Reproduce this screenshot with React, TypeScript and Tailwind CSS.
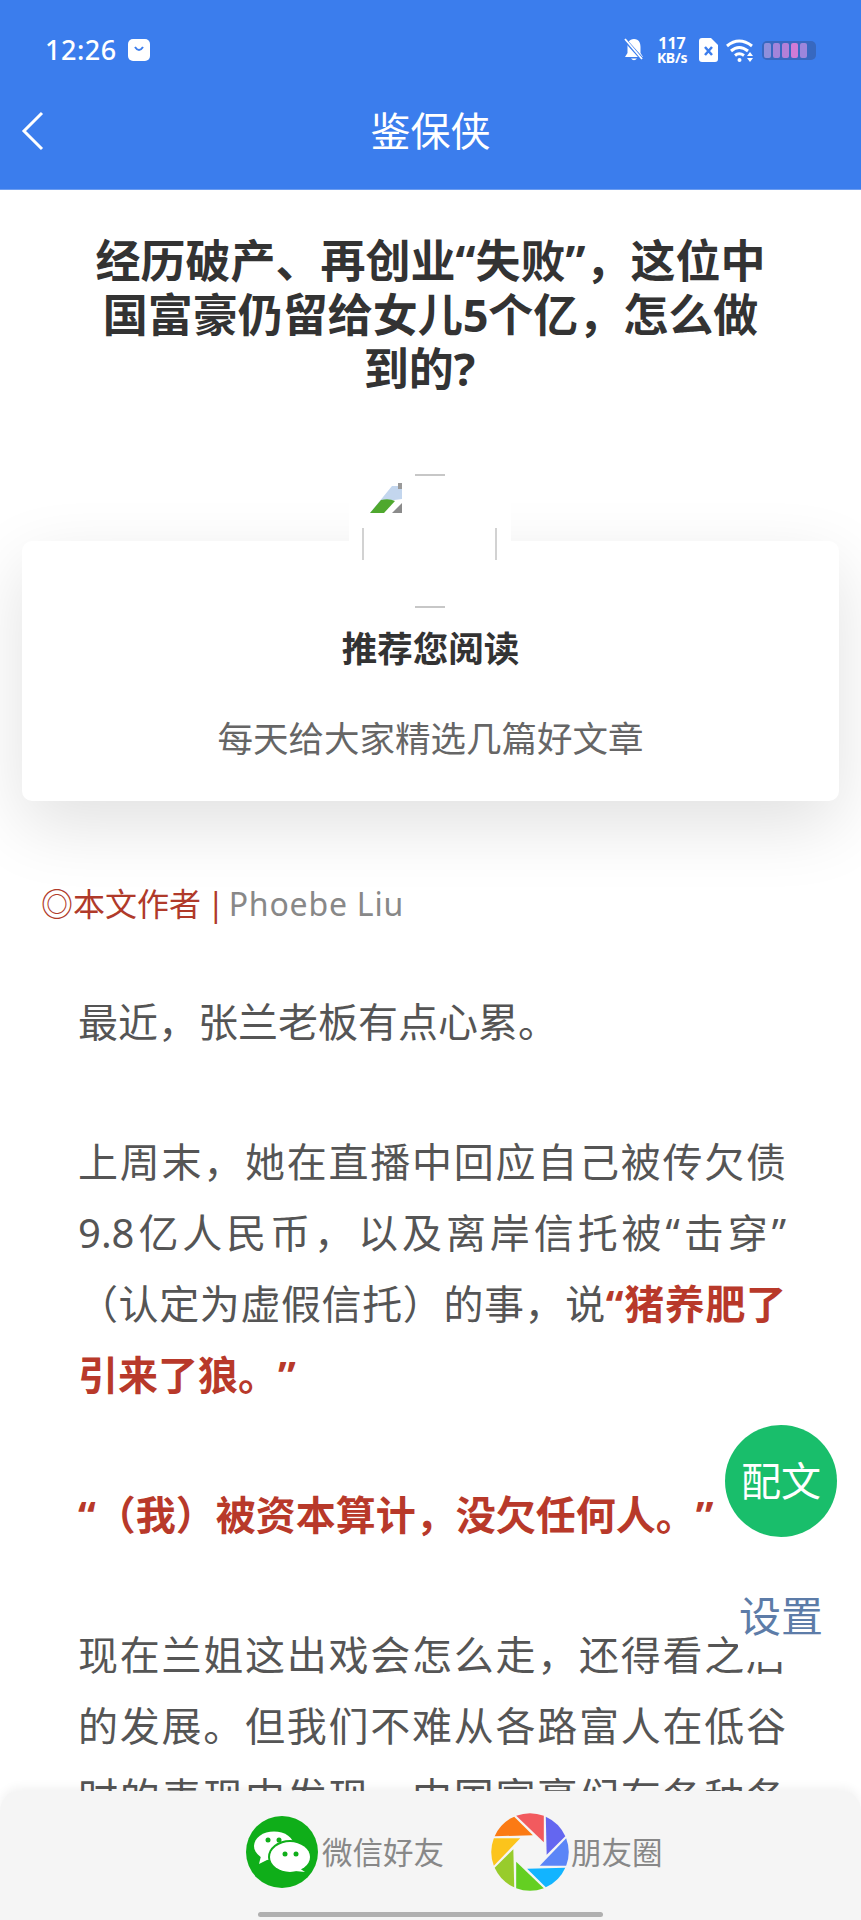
const blades = ["#f25a5e", "#6466f0", "#5b85f7", "#12b4ff", "#64cf22", "#98cc2c", "#fcc41c", "#fb7a14"];

function Aperture() {
  return (
    <svg width="78" height="78" viewBox="-48 -48 96 96">
      {blades.map((c, i) => (
        <path key={c} d="M-17,-44.5 A48,48 0 0 1 17,-44.5 L17,-12 Z" fill={c} transform={`rotate(${i * 45})`} />
      ))}
    </svg>
  );
}

function WechatIcon() {
  return (
    <svg width="72" height="72" viewBox="0 0 72 72">
      <circle cx="36" cy="36" r="36" fill="#0fae19" />
      <ellipse cx="28" cy="30" rx="20" ry="14.500" fill="#fff" />
      <path d="M15 40 L13 48 L23 43 Z" fill="#fff" />
      <ellipse cx="44" cy="41" rx="22" ry="17" fill="#0fae19" />
      <ellipse cx="44" cy="41" rx="20" ry="15" fill="#fff" />
      <path d="M53 52 L59 56 L49 55 Z" fill="#fff" />
      <circle cx="22" cy="24" r="2.500" fill="#0fae19" />
      <circle cx="33" cy="24" r="2.500" fill="#0fae19" />
      <circle cx="39" cy="38" r="2.500" fill="#0fae19" />
      <circle cx="50" cy="38" r="2.500" fill="#0fae19" />
    </svg>
  );
}

function BrokenAvatar() {
  // the failed avatar image: broken-picture glyph and what is left of its round border
  return (
    <svg width="162" height="140" viewBox="0 0 162 140">
      <rect width="162" height="140" fill="#fff" />
      <path d="M66 5 H96 M66 137 H96" stroke="#b5b5b5" strokeWidth="1.5" />
      <path d="M14 58 V90 M147 58 V90" stroke="#c4c4c4" strokeWidth="1.5" />
      <path d="M21 43 L43 16 L53 16 L53 29 L38 31 Z" fill="#c3d6ee" />
      <path d="M21 43 L32 30 Q40 28 46 31 L35 43 Z" fill="#4fa82e" />
      <path d="M43 43 L53 33 V43 Z" fill="#8b8b8b" />
      <path d="M49 13 H53 V19 H49 Z" fill="#9a9a9a" />
    </svg>
  );
}

export default function App() {
  return (
    <div
      className="relative w-[861px] h-[1920px] overflow-hidden bg-white"
      style={{ fontFamily: '"Noto Sans", "Noto Sans CJK SC", sans-serif' }}
    >
      {/* header */}
      <header className="h-[190px] bg-[#3b7ded] text-white border-b border-[#6d9df0]">
        <div className="h-[86px] pt-[28px] pl-[45px] pr-[45px] flex items-start justify-between">
          <div className="flex items-center gap-[11px] h-[44px]">
            <span className="text-[27px] font-medium tracking-[0.5px]">12:26</span>
            <svg width="22" height="22" viewBox="0 0 22 22">
              <rect width="22" height="22" rx="5" fill="#fff" />
              <path d="M7 8 Q11 14 15 8" stroke="#3b7ded" strokeWidth="2" fill="none" />
            </svg>
          </div>
          <div className="flex items-center h-[44px]">
            <svg width="20" height="24" viewBox="0 0 20 24" className="mr-[12px]">
              <path d="M10 1 C5 1 3.5 5 3.5 9 V15 L1 19 H19 L16.500 15 V9 C16.500 5 15 1 10 1 Z M7 20.500 Q10 24 13 20.500 Z" fill="#fff" />
              <path d="M1 2 L19 22" stroke="#3b7ded" strokeWidth="3.500" />
              <path d="M1 1 L18 21" stroke="#fff" strokeWidth="1.800" />
            </svg>
            <div className="w-[32px] mr-[11px] flex flex-col items-center font-bold leading-none">
              <span className="text-[16px] leading-[15px]">117</span>
              <span className="text-[14px] leading-[13px] tracking-[-0.3px]">KB/s</span>
            </div>
            <svg width="19" height="24" viewBox="0 0 19 24" className="mr-[8px]">
              <path d="M3 0 H12 L19 7 V21 Q19 24 16 24 H3 Q0 24 0 21 V3 Q0 0 3 0 Z" fill="#fff" />
              <path d="M6 9 L13 17 M13 9 L6 17" stroke="#3b7ded" strokeWidth="2.500" />
            </svg>
            <svg width="28" height="23" viewBox="0 0 28 23" className="mr-[8px]">
              <path d="M1 7 Q13 -3 26 7 M5 12 Q13 5 22 12 M9 16.500 Q13 13 18 16.500" stroke="#fff" strokeWidth="3" fill="none" />
              <circle cx="13.500" cy="21" r="2" fill="#fff" />
              <path d="M24 13 L27 17 H21 Z M24 23 L27 19 H21 Z" fill="#fff" />
            </svg>
            <div className="w-[54px] h-[19px] rounded-[5px] bg-[#3768c0] flex gap-[2px] p-[2px] pr-0 overflow-hidden">
              <div className="w-[7px] bg-[#8e8fdc] rounded-[2px]" />
              <div className="w-[7px] bg-[#a384da] rounded-[2px]" />
              <div className="w-[7px] bg-[#b380d8] rounded-[2px]" />
              <div className="w-[7px] bg-[#cf7bd6] rounded-[2px]" />
              <div className="w-[7px] bg-[#9c86dc] rounded-[2px]" />
            </div>
          </div>
        </div>
        <div className="relative h-[90px] flex items-center justify-center">
          <svg width="24" height="40" viewBox="0 0 24 40" className="absolute left-[21px] top-[25px]">
            <path d="M21 2 L3 20 L21 38" stroke="#fff" strokeWidth="3" fill="none" />
          </svg>
          <span className="text-[40px] leading-none">鉴保侠</span>
        </div>
      </header>

      {/* title */}
      <h1 className="pt-[44px] text-center text-[45px] leading-[54px] font-bold text-[#333] whitespace-nowrap [text-spacing-trim:space-all]">
        经历破产、再创业“失败”，这位中
        <br />
        国富豪仍留给女儿5个亿，怎么做
        <br />
        <span className="pr-[22px]">到的?</span>
      </h1>

      {/* recommend card */}
      <section className="relative mt-[145px] mx-[22px] h-[260px] bg-white rounded-[10px] shadow-[0_24px_70px_rgba(0,0,0,0.12)] flex flex-col items-center">
        <div className="absolute left-[327px] top-[-71px]">
          <BrokenAvatar />
        </div>
        <div className="mt-[85px] text-[35.500px] leading-[44px] font-bold text-[#333]">推荐您阅读</div>
        <div className="mt-[46px] text-[35.500px] leading-[44px] text-[#666]">每天给大家精选几篇好文章</div>
      </section>

      {/* byline */}
      <div className="mt-[83px] ml-[41px] h-[40px] text-[32px] leading-[40px] whitespace-nowrap text-[#b03a2a]">
        <span>◎本文作者</span>
        <span className="ml-[6px]">|</span>
        <span className="ml-[4px] text-[#888] tracking-[0.8px]">Phoebe Liu</span>
      </div>

      {/* article */}
      <article className="mt-[62px] pl-[78px] pr-[75px] text-[40px] leading-[71px] text-[#555] text-justify [text-spacing-trim:space-all]">
        <p className="mb-[69px]">最近，张兰老板有点心累。</p>
        <p className="mb-[69px]">
          <span className="block [text-align-last:justify]">上周末，她在直播中回应自己被传欠债9.8亿人民币，以及离岸信托被“击穿”</span>
          <span className="block">
            （认定为虚假信托）的事，说
            <strong className="font-bold text-[#b8392a]">“猪养肥了引来了狼。”</strong>
          </span>
        </p>
        <p className="mb-[69px] font-bold text-[#b8392a]">“（我）被资本算计，没欠任何人。”</p>
        <p>现在兰姐这出戏会怎么走，还得看之后的发展。但我们不难从各路富人在低谷时的表现中发现，中国富豪们有各种各样的</p>
      </article>

      {/* floating buttons */}
      <div className="absolute left-[725px] top-[1425px] w-[112px] h-[112px] rounded-full bg-[#19be6b] flex items-center justify-center text-white text-[40px]">
        配文
      </div>
      <div className="absolute left-[738px] top-[1581px] w-[86px] h-[81px] bg-white flex items-center justify-center pb-[13px] text-[#5d7ca8] text-[42px] whitespace-nowrap">
        设置
      </div>

      {/* share bar */}
      <div className="absolute left-0 right-0 bottom-0 h-[129px] bg-[#f5f5f5] rounded-t-[20px] shadow-[0_-4px_10px_rgba(0,0,0,0.05)]">
        <div className="flex items-center pl-[246px] pt-[22px] text-[30.500px] leading-[40px] text-[#888]">
          <WechatIcon />
          <span className="ml-[4px]">微信好友</span>
          <span className="ml-[47px]">
            <Aperture />
          </span>
          <span className="ml-[2px]">朋友圈</span>
        </div>
        <div className="absolute left-[258px] top-[121px] w-[345px] h-[5px] rounded-full bg-[#b0b0b0]" />
      </div>
    </div>
  );
}
